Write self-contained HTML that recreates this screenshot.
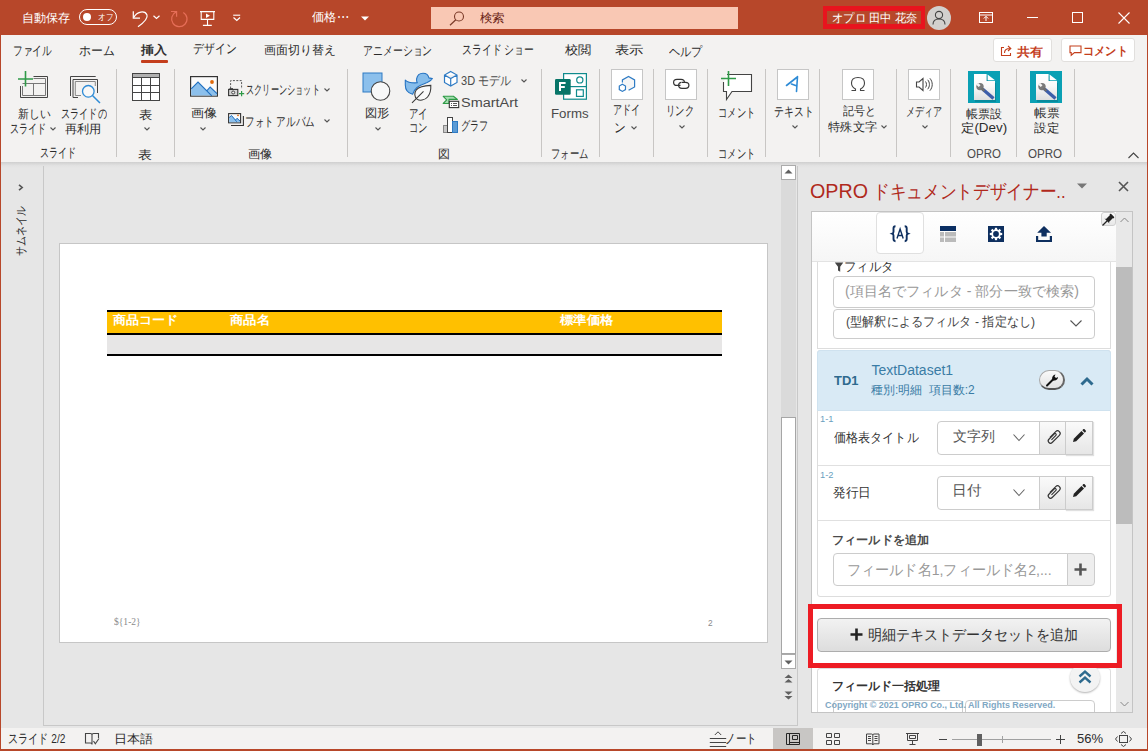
<!DOCTYPE html>
<html lang="ja"><head><meta charset="utf-8">
<style>
*{box-sizing:border-box}
html,body{margin:0;padding:0}
body{width:1148px;height:751px;position:relative;overflow:hidden;background:#E6E6E6;font-family:"Liberation Sans",sans-serif;color:#2B2B2B}
.a{position:absolute}
.t{position:absolute;white-space:nowrap;line-height:1;font-size:12px;transform-origin:0 0}
.w{color:#fff}
.sep{position:absolute;width:1px;background:#C8C6C4}
svg{position:absolute;overflow:visible}
</style></head><body>
<svg width="0" height="0" style="position:absolute"><defs><linearGradient id="dg" x1="0" y1="0" x2="0" y2="1"><stop offset="0" stop-color="#FFFFFF"/><stop offset="0.45" stop-color="#FAFAFA"/><stop offset="1" stop-color="#DEDEDE"/></linearGradient></defs></svg>
<!-- title bar -->
<div class="a" style="left:0;top:0;width:1148px;height:35px;background:#B7472A"></div>
<div id="t_autosave" class="t w" style="left:22.4px;top:11.5px;transform:scaleX(1.011)">自動保存</div>
<div class="a" style="left:79px;top:9px;width:38px;height:16px;border:1px solid #fff;border-radius:8px"></div>
<div class="a" style="left:83px;top:13px;width:8px;height:8px;border-radius:50%;background:#fff"></div>
<div id="t_off" class="t w" style="left:97.5px;top:12.9px;font-size:9px;transform:scaleX(0.848)">オフ</div>
<svg style="left:125px;top:5px" width="30" height="25" viewBox="125 5 30 25"><path d="M133.3 11.3 V18.2 H140" fill="none" stroke="#fff" stroke-width="1.2"/><path d="M133.8 17.6 C136.5 11.5 145 10 147 15 C148 18 146 21 138 26.8" fill="none" stroke="#fff" stroke-width="1.2"/></svg>
<svg style="left:152px;top:14px" width="9" height="6" viewBox="152 14 9 6"><path d="M153.5 15.7 L156.5 18.5 L159.5 15.7" fill="none" stroke="#fff" stroke-width="1.2"/></svg>
<svg style="left:168px;top:8px" width="22" height="22" viewBox="168 8 22 22"><path d="M176.3 11.9 A7.7 7.7 0 1 0 183.3 12.4" fill="none" stroke="#E66E58" stroke-width="1.2"/><path d="M171 11.5 H176.6 V16.8" fill="none" stroke="#E66E58" stroke-width="1.2"/></svg>
<svg style="left:198px;top:9px" width="19" height="19" viewBox="198 9 19 19"><path d="M200 11.6 H215 M201.2 11.6 V19.4 H213.8 V11.6 M207.5 19.4 V25.4 M202.9 25.4 H211.8" fill="none" stroke="#fff" stroke-width="1.1"/><path d="M206 13.4 L210 15.7 L206 18 Z" fill="#fff"/></svg>
<svg style="left:231px;top:13px" width="11" height="9" viewBox="231 13 11 9"><path d="M233.2 15.2 H240.2" stroke="#fff" stroke-width="1.1"/><path d="M233.5 17.5 L236.8 20.5 L240 17.5" fill="none" stroke="#fff" stroke-width="1.2"/></svg>
<div id="t_fname" class="t w" style="left:312.0px;top:11.4px;transform:scaleX(1.029)">価格⋯</div>
<svg style="left:361px;top:16px" width="8" height="5" viewBox="0 0 8 5"><path d="M0 0.5 H8 L4 4.5 Z" fill="#fff"/></svg>
<div class="a" style="left:431px;top:7px;width:307px;height:22px;background:#F9C8B4"></div>
<svg style="left:449px;top:11px" width="16" height="15" viewBox="0 0 16 15"><circle cx="10" cy="5.5" r="4.5" fill="none" stroke="#7A3A28" stroke-width="1.1"/><path d="M6.8 8.7 L1 14.3" stroke="#7A3A28" stroke-width="1.2"/></svg>
<div id="t_search" class="t" style="left:479.7px;top:12.0px;color:#6A2414;transform:scaleX(1.037)">検索</div>
<div class="a" style="left:823px;top:6px;width:102px;height:23px;border-style:solid;border-color:#E8141E;border-width:5px 4px"></div>
<div id="t_user" class="t w" style="left:832.1px;top:12.0px;transform:scaleX(0.944)">オプロ 田中 花奈</div>
<div class="a" style="left:927px;top:6px;width:24px;height:24px;border-radius:50%;background:#D2D0CE"></div>
<svg style="left:932px;top:10px" width="14" height="16" viewBox="0 0 14 16"><circle cx="7" cy="5" r="3.6" fill="none" stroke="#444" stroke-width="1.1"/><path d="M1 14.5 C1 10.5 3.5 9 7 9 C10.5 9 13 10.5 13 14.5" fill="none" stroke="#444" stroke-width="1.1"/></svg>
<svg style="left:979px;top:12px" width="14" height="11" viewBox="0 0 14 11"><rect x="0.5" y="0.5" width="13" height="10" fill="none" stroke="#fff" stroke-width="1"/><path d="M0.5 3 H13.5 M7 9 V4.5 M4.8 6.5 L7 4.3 L9.2 6.5" fill="none" stroke="#fff" stroke-width="1"/></svg>
<div class="a" style="left:1027px;top:17px;width:11px;height:1px;background:#fff"></div>
<div class="a" style="left:1072px;top:12px;width:11px;height:11px;border:1px solid #fff"></div>
<svg style="left:1118px;top:12px" width="12" height="12" viewBox="0 0 12 12"><path d="M0.5 0.5 L11.5 11.5 M11.5 0.5 L0.5 11.5" stroke="#fff" stroke-width="1.1"/></svg>

<!-- window border -->
<div class="a" style="left:0;top:35px;width:1px;height:716px;background:#B7472A"></div>
<div class="a" style="left:1147px;top:35px;width:1px;height:716px;background:#B7472A"></div>
<div class="a" style="left:0;top:749px;width:1148px;height:2px;background:#B7472A"></div>

<!-- ribbon -->
<div class="a" style="left:1px;top:35px;width:1146px;height:127px;background:#F3F2F1"></div>
<div class="a" style="left:1px;top:162px;width:1146px;height:6px;background:linear-gradient(#CFCFCF,#E2E2E2 60%,#E6E6E6)"></div>
<!-- tabs -->
<div id="t_file" class="t" style="left:13.3px;top:43.5px;font-size:13px;transform:scaleX(0.748)">ファイル</div>
<div id="t_home" class="t" style="left:79.1px;top:43.5px;font-size:13px;transform:scaleX(0.916)">ホーム</div>
<div id="t_insert" class="t" style="left:141.0px;top:44.0px;font-weight:bold;color:#333;transform:scaleX(1.083)">挿入</div>
<div class="a" style="left:141px;top:60px;width:27px;height:3px;background:#C43E1C;border-radius:1px"></div>
<div id="t_design" class="t" style="left:193.2px;top:42.0px;font-size:13px;transform:scaleX(0.834)">デザイン</div>
<div id="t_trans" class="t" style="left:264.0px;top:44.0px;transform:scaleX(1.000)">画面切り替え</div>
<div id="t_anim" class="t" style="left:363.3px;top:43.5px;font-size:13px;transform:scaleX(0.762)">アニメーション</div>
<div id="t_show" class="t" style="left:462.3px;top:42.5px;font-size:13px;transform:scaleX(0.759)">スライド ショー</div>
<div id="t_review" class="t" style="left:564.5px;top:44.0px;transform:scaleX(1.105)">校閲</div>
<div id="t_view" class="t" style="left:615.4px;top:44.0px;transform:scaleX(1.192)">表示</div>
<div id="t_help" class="t" style="left:669.3px;top:44.5px;font-size:13px;transform:scaleX(0.861)">ヘルプ</div>
<div class="a" style="left:993px;top:38px;width:59px;height:24px;background:#fff;border:1px solid #E1DFDD;border-radius:3px"></div>
<svg style="left:1000px;top:44px" width="13" height="13" viewBox="1000 44 13 13"><path d="M1004 47.5 H1001.5 V55.5 H1010.5 V53" fill="none" stroke="#C43E1C" stroke-width="1.1"/><path d="M1004.5 53 C1004.5 49.5 1006.5 48.5 1010 48.5 M1008 46 L1010.8 48.5 L1008 51" fill="none" stroke="#C43E1C" stroke-width="1.1"/></svg>
<div id="t_share" class="t" style="left:1017.0px;top:45.5px;font-weight:bold;color:#C43E1C;transform:scaleX(1.076)">共有</div>
<div class="a" style="left:1061px;top:38px;width:74px;height:24px;background:#fff;border:1px solid #E1DFDD;border-radius:3px"></div>
<svg style="left:1068px;top:44px" width="15" height="13" viewBox="1068 44 15 13"><path d="M1070 46 H1081 V52.6 H1074.5 L1071.2 55.3 V52.6 H1070 Z" fill="none" stroke="#C43E1C" stroke-width="1.1"/></svg>
<div id="t_comment" class="t" style="left:1083.2px;top:44.5px;font-weight:bold;color:#C43E1C;transform:scaleX(0.933)">コメント</div>
<!-- ribbon groups -->
<div class="sep" style="left:116px;top:69px;height:88px"></div>
<div class="sep" style="left:174px;top:69px;height:88px"></div>
<div class="sep" style="left:347px;top:69px;height:88px"></div>
<div class="sep" style="left:541px;top:69px;height:88px"></div>
<div class="sep" style="left:599px;top:69px;height:88px"></div>
<div class="sep" style="left:653px;top:69px;height:88px"></div>
<div class="sep" style="left:707px;top:69px;height:88px"></div>
<div class="sep" style="left:765px;top:69px;height:88px"></div>
<div class="sep" style="left:819px;top:69px;height:88px"></div>
<div class="sep" style="left:896px;top:69px;height:88px"></div>
<div class="sep" style="left:950px;top:69px;height:88px"></div>
<div class="sep" style="left:1016px;top:69px;height:88px"></div>
<div class="sep" style="left:1074px;top:69px;height:88px"></div>
<!-- RIBBON CONTENT -->
<!-- new slide -->
<svg style="left:18px;top:71px" width="32" height="29" viewBox="18 71 32 29">
<path d="M33.5 76.5 H47.5 V97.5 H20.5 V86" fill="none" stroke="#444" stroke-width="1"/>
<path d="M33.5 78.5 H45.5 V95.5 H22.5 V86 M22.5 83.5 H45.5 M33.5 83.5 V95.5" fill="none" stroke="#777" stroke-width="1"/>
<path d="M18 79 H33 M25.5 71 V86.5" fill="none" stroke="#2F9A48" stroke-width="1.6"/>
</svg>
<div id="t_new1" class="t" style="left:17.7px;top:107.8px;transform:scaleX(0.899)">新しい</div>
<div id="t_new2" class="t" style="left:10.4px;top:121.6px;font-size:13px;transform:scaleX(0.699)">スライド</div>
<svg class="cr" style="left:50px;top:127px" width="6" height="4" viewBox="0 0 6 4"><path d="M0.5 0.5 L3 3 L5.5 0.5" fill="none" stroke="#555" stroke-width="1.1"/></svg>
<!-- reuse -->
<svg style="left:69px;top:75px" width="33" height="29" viewBox="69 75 33 29">
<path d="M70.5 96 V76.5 H95.7" fill="none" stroke="#444" stroke-width="1"/>
<path d="M78 97.5 H73 V79.5 H97.5 V93" fill="none" stroke="#444" stroke-width="1"/>
<path d="M81 95.5 H75.3 V81.5 H95.3 V86" fill="none" stroke="#888" stroke-width="1"/>
<circle cx="88.3" cy="91.3" r="5.8" fill="#F8F8F8" stroke="#2E8BD6" stroke-width="1.3"/>
<path d="M92.5 95.5 L100 103" stroke="#2E8BD6" stroke-width="1.5"/>
</svg>
<div id="t_reuse1" class="t" style="left:61.0px;top:106.8px;font-size:13px;transform:scaleX(0.704)">スライドの</div>
<div id="t_reuse2" class="t" style="left:65.2px;top:123.1px;transform:scaleX(1.015)">再利用</div>
<div id="t_g_slide" class="t" style="left:40.4px;top:146.3px;font-size:13px;transform:scaleX(0.699)">スライド</div>
<!-- table -->
<svg style="left:131px;top:72px" width="31" height="30" viewBox="131 72 31 30">
<rect x="132.5" y="73.5" width="27" height="27" fill="#fff" stroke="#444" stroke-width="1"/>
<rect x="133" y="74" width="26" height="3" fill="#B0B0B0"/>
<path d="M132.5 77.5 H159.5 M132.5 85.5 H159.5 M132.5 92.5 H159.5 M141.5 77.5 V100.5 M150.5 77.5 V100.5" fill="none" stroke="#444" stroke-width="1"/>
</svg>
<div id="t_table" class="t" style="left:138.9px;top:108.5px;transform:scaleX(1.108)">表</div>
<svg class="cr" style="left:144px;top:127px" width="6" height="4" viewBox="0 0 6 4"><path d="M0.5 0.5 L3 3 L5.5 0.5" fill="none" stroke="#555" stroke-width="1.1"/></svg>
<div id="t_g_table" class="t" style="left:138.1px;top:148.5px;transform:scaleX(1.165)">表</div>
<!-- image -->
<svg style="left:189px;top:75px" width="30" height="23" viewBox="189 75 30 23">
<rect x="190.6" y="76.6" width="26.8" height="19.5" fill="#FAFAFA" stroke="#333" stroke-width="1.2"/>
<path d="M191.2 88.8 L198 82 L207 90.6 L210.2 87 L217 93.6 V95.6 H191.2 Z" fill="#8CC0EC"/>
<path d="M191.2 88.8 L198 82 L211.8 95.8 M207 90.6 L210.2 87 L217 93.6" fill="none" stroke="#1F6FC0" stroke-width="1.1"/>
<circle cx="212" cy="82" r="1.9" fill="#E0690A"/>
</svg>
<div id="t_image" class="t" style="left:190.9px;top:107.3px;transform:scaleX(1.091)">画像</div>
<svg class="cr" style="left:200px;top:127px" width="6" height="4" viewBox="0 0 6 4"><path d="M0.5 0.5 L3 3 L5.5 0.5" fill="none" stroke="#555" stroke-width="1.1"/></svg>
<svg style="left:227px;top:79px" width="18" height="18" viewBox="227 79 18 18">
<path d="M230.6 88.5 V80.6 H241.6 V89" fill="none" stroke="#555" stroke-width="1" stroke-dasharray="2 1.4"/>
<rect x="228.6" y="89.4" width="9.2" height="6.2" fill="#D4D4D4" stroke="#333" stroke-width="1.1"/>
<rect x="229.5" y="88.2" width="3.5" height="1.4" fill="#333"/>
<circle cx="233.2" cy="92.5" r="1.5" fill="#F4F4F4" stroke="#333" stroke-width="0.9"/>
<path d="M239 93.6 H244.2 M241.6 91 V96.2" stroke="#2F9A48" stroke-width="1.2"/>
</svg>
<div id="t_screenshot" class="t" style="left:246.4px;top:82.7px;font-size:13px;transform:scaleX(0.630)">スクリーンショット</div>
<svg class="cr" style="left:324px;top:88px" width="6" height="4" viewBox="0 0 6 4"><path d="M0.5 0.5 L3 3 L5.5 0.5" fill="none" stroke="#555" stroke-width="1.1"/></svg>
<svg style="left:227px;top:112px" width="18" height="15" viewBox="227 112 18 15">
<path d="M231 125.5 H243.4 V116" fill="none" stroke="#333" stroke-width="1.1"/>
<rect x="228.6" y="113.6" width="12" height="9.2" fill="#FAFAFA" stroke="#333" stroke-width="1.1"/>
<path d="M229.2 117.5 L231.5 115.5 L235.5 120 L237 118.3 L240 121 V122.2 H229.2 Z" fill="#8CC0EC"/>
<path d="M229.2 117.5 L231.5 115.5 L236.8 121.8 M235.5 120 L237 118.3 L240 121" fill="none" stroke="#1F6FC0" stroke-width="1"/>
<circle cx="238" cy="115.3" r="0.9" fill="#E0690A"/>
</svg>
<div id="t_album" class="t" style="left:245.3px;top:114.6px;font-size:13px;transform:scaleX(0.738)">フォト アルバム</div>
<svg class="cr" style="left:324px;top:119px" width="6" height="4" viewBox="0 0 6 4"><path d="M0.5 0.5 L3 3 L5.5 0.5" fill="none" stroke="#555" stroke-width="1.1"/></svg>
<div id="t_g_image" class="t" style="left:248.4px;top:147.8px;transform:scaleX(1.024)">画像</div>
<!-- shapes -->
<svg style="left:362px;top:72px" width="30" height="30" viewBox="362 72 30 30">
<rect x="363" y="73" width="19" height="19" fill="#8CC0EC" stroke="#2E7BC4" stroke-width="1"/>
<circle cx="380.5" cy="91" r="9.3" fill="#F8F8F8" stroke="#444" stroke-width="1.1"/>
</svg>
<div id="t_shapes" class="t" style="left:365.0px;top:106.8px;transform:scaleX(1.023)">図形</div>
<svg class="cr" style="left:375px;top:127px" width="6" height="4" viewBox="0 0 6 4"><path d="M0.5 0.5 L3 3 L5.5 0.5" fill="none" stroke="#555" stroke-width="1.1"/></svg>
<!-- icons -->
<svg style="left:403px;top:71px" width="32" height="33" viewBox="403 71 32 33"><path d="M405.3 80.1 C407.5 82.3 411 83.2 417.3 82.8 C416.6 81.6 416.4 80.2 416.6 78.8 C417.2 75.5 419.8 73.2 423 73.2 C426 73.2 428.4 75.3 428.9 77.9 L432.4 78.6 C431.3 80.6 429.6 81.6 427.2 82.6 C423.5 84 420 85 417 87.5 C414.8 89.5 413.2 91.8 412.6 94.3 C407.8 93 405.3 89.5 405.3 85 Z" fill="#86BDEB" stroke="#2573C2" stroke-width="1.1" stroke-linejoin="round"/><path d="M430.8 85.4 C426 85.6 419.5 86.2 416.3 89.8 C414 92.5 414.4 97.3 417 99.1 C419.5 100.9 424.5 100.6 427.6 97 C430.4 93.6 431 89.3 430.8 85.4 Z" fill="#FAFAFA" stroke="#3A3A3A" stroke-width="1.1"/><path d="M412 102.8 L423.5 91.4" stroke="#3A3A3A" stroke-width="1.1"/></svg>
<div id="t_icon1" class="t" style="left:409.3px;top:106.5px;font-size:13px;transform:scaleX(0.725)">アイ</div>
<div id="t_icon2" class="t" style="left:408.6px;top:120.6px;font-size:13px;transform:scaleX(0.725)">コン</div>
<svg style="left:443px;top:70px" width="16" height="18" viewBox="443 70 16 18">
<path d="M450.7 71.5 L457 75 V82.5 L450.7 86 L444.5 82.5 V75 Z M444.5 75 L450.7 78.5 L457 75 M450.7 78.5 V86" fill="#fff" stroke="#2E7BC4" stroke-width="1.2"/>
</svg>
<div id="t_3d" class="t" style="left:461.1px;top:73.8px;color:#4A4A4A;font-size:13px;transform:scaleX(0.849)">3D モデル</div>
<svg class="cr" style="left:521px;top:79px" width="6" height="4" viewBox="0 0 6 4"><path d="M0.5 0.5 L3 3 L5.5 0.5" fill="none" stroke="#555" stroke-width="1.1"/></svg>
<svg style="left:442px;top:95px" width="18" height="14" viewBox="442 95 18 14">
<path d="M443.2 96.3 H453.4 L457.4 99.4 H449 V103.5 H443.2 L446.7 99.9 Z" fill="#A6DDB0" stroke="#2C9A45" stroke-width="1.1" stroke-linejoin="round"/>
<rect x="449.3" y="101.3" width="9.4" height="6.3" fill="#fff" stroke="#333" stroke-width="1.1"/>
<path d="M451 103.5 H452 M453 103.5 H457 M451 105.5 H452 M453 105.5 H457" stroke="#444" stroke-width="0.9"/>
</svg>
<div id="t_smartart" class="t" style="left:460.8px;top:97.4px;color:#4A4A4A;transform:scaleX(1.203)">SmartArt</div>
<svg style="left:442px;top:116px" width="18" height="18" viewBox="442 116 18 18">
<rect x="443.5" y="125.5" width="4" height="7" fill="#C8C8C8" stroke="#888" stroke-width="1"/>
<rect x="447.5" y="117.5" width="5" height="15" fill="#fff" stroke="#444" stroke-width="1"/>
<rect x="452.5" y="121.5" width="5" height="11" fill="#5B9BD5" stroke="#2E7BC4" stroke-width="1"/>
</svg>
<div id="t_graph" class="t" style="left:461.3px;top:119.0px;font-size:13px;transform:scaleX(0.707)">グラフ</div>
<div id="t_g_zu" class="t" style="left:438.0px;top:147.9px;transform:scaleX(1.000)">図</div>
<!-- forms -->
<svg style="left:554px;top:72px" width="34" height="29" viewBox="554 72 34 29">
<rect x="563.6" y="73.6" width="22.8" height="25.6" fill="#fff" stroke="#0F8B8D" stroke-width="1.2"/>
<path d="M563.6 86.6 H586.4" stroke="#0F8B8D" stroke-width="1.2"/>
<circle cx="579.8" cy="79.9" r="3.1" fill="none" stroke="#0F8B8D" stroke-width="1.2"/>
<rect x="576.5" y="89.8" width="6.8" height="6.6" fill="none" stroke="#0F8B8D" stroke-width="1.2"/>
<rect x="555" y="79" width="15.7" height="15.8" rx="1.2" fill="#077568"/>
<path d="M560 91 V83 H565.6 M560 86.9 H564.8" stroke="#fff" stroke-width="2" fill="none"/>
</svg>
<div id="t_forms" class="t" style="left:551.4px;top:108.0px;color:#4A4A4A;transform:scaleX(1.106)">Forms</div>
<div id="t_g_form" class="t" style="left:550.8px;top:146.5px;font-size:13px;transform:scaleX(0.721)">フォーム</div>
<!-- addin -->
<div class="a" style="left:611px;top:69px;width:32px;height:31px;background:#fff;border:1px solid #C6C6C6"></div>
<svg style="left:616px;top:74px" width="21" height="20" viewBox="616 74 21 20"><path d="M622.4 82.6 V79.9 L628.5 76.4 L634.6 79.9 V86.9 L628.6 90.3" fill="#F6F6F6" stroke="#2E7BC4" stroke-width="1.2"/><path d="M622.4 84.2 L625.5 86 V89.6 L622.4 91.4 L619.3 89.6 V86 Z" fill="#fff" stroke="#2E7BC4" stroke-width="1.2"/></svg>
<div id="t_addin1" class="t" style="left:613.4px;top:103.2px;font-size:13px;transform:scaleX(0.697)">アドイ</div>
<div id="t_addin2" class="t" style="left:614.2px;top:120.5px;font-size:13px;transform:scaleX(0.900)">ン</div>
<svg class="cr" style="left:631px;top:126px" width="6" height="4" viewBox="0 0 6 4"><path d="M0.5 0.5 L3 3 L5.5 0.5" fill="none" stroke="#555" stroke-width="1.1"/></svg>
<!-- link -->
<div class="a" style="left:665px;top:69px;width:32px;height:31px;background:#fff;border:1px solid #C6C6C6"></div>
<svg style="left:672px;top:78px" width="19" height="12" viewBox="672 78 19 12"><path d="M680.5 85.4 H677 C675 85.4 673.6 84.1 673.6 82.4 C673.6 80.7 675 79.4 677 79.4 H681 C683 79.4 684.4 80.7 684.4 82.4" fill="none" stroke="#333" stroke-width="1.2"/><path d="M681.5 82.3 H685.5 C687.5 82.3 688.9 83.6 688.9 85.3 C688.9 87 687.5 88.3 685.5 88.3 H682 C680 88.3 678.6 87 678.6 85.3 C678.6 83.8 679.6 82.8 681 82.4" fill="none" stroke="#333" stroke-width="1.2"/></svg>
<div id="t_link" class="t" style="left:665.9px;top:103.5px;font-size:13px;transform:scaleX(0.717)">リンク</div>
<svg class="cr" style="left:679px;top:125px" width="6" height="4" viewBox="0 0 6 4"><path d="M0.5 0.5 L3 3 L5.5 0.5" fill="none" stroke="#555" stroke-width="1.1"/></svg>
<!-- comment -->
<svg style="left:720px;top:70px" width="33" height="31" viewBox="720 70 33 31">
<path d="M727 74.5 H751.5 V91.5 H732 L726.5 99.5 V91.5 H723.5 V82" fill="#fff" stroke="#444" stroke-width="1.1"/>
<path d="M721 78.5 H736 M728.5 71 V86" stroke="#2F9A48" stroke-width="1.6"/>
</svg>
<div id="t_comment_r" class="t" style="left:718.0px;top:106.1px;font-size:13px;transform:scaleX(0.717)">コメント</div>
<div id="t_g_comment" class="t" style="left:718.0px;top:146.5px;font-size:13px;transform:scaleX(0.717)">コメント</div>
<!-- text -->
<div class="a" style="left:777px;top:69px;width:32px;height:31px;background:#fff;border:1px solid #C6C6C6"></div>
<svg style="left:785px;top:75px" width="16" height="18" viewBox="785 75 16 18">
<path d="M797.5 76.5 L796.5 91.5 M797.3 77 L786.5 85.5 M791.5 84 L797 86" fill="none" stroke="#2E8BD6" stroke-width="1.6" stroke-linecap="round"/>
</svg>
<div id="t_text" class="t" style="left:774.3px;top:104.8px;font-size:13px;transform:scaleX(0.757)">テキスト</div>
<svg class="cr" style="left:792px;top:125px" width="6" height="4" viewBox="0 0 6 4"><path d="M0.5 0.5 L3 3 L5.5 0.5" fill="none" stroke="#555" stroke-width="1.1"/></svg>
<!-- symbol -->
<div class="a" style="left:842px;top:69px;width:32px;height:31px;background:#fff;border:1px solid #C6C6C6"></div>
<svg style="left:850px;top:76px" width="16" height="16" viewBox="850 76 16 16">
<path d="M851.5 90.5 H855.5 V89 C852.5 87.5 851.5 85 851.5 83 C851.5 79.5 854.3 77.5 858 77.5 C861.7 77.5 864.5 79.5 864.5 83 C864.5 85 863.5 87.5 860.5 89 V90.5 H864.5" fill="none" stroke="#444" stroke-width="1.1"/>
</svg>
<div id="t_sym1" class="t" style="left:843.0px;top:105.3px;transform:scaleX(0.913)">記号と</div>
<div id="t_sym2" class="t" style="left:828.0px;top:121.2px;transform:scaleX(1.021)">特殊文字</div>
<svg class="cr" style="left:881px;top:125px" width="6" height="4" viewBox="0 0 6 4"><path d="M0.5 0.5 L3 3 L5.5 0.5" fill="none" stroke="#555" stroke-width="1.1"/></svg>
<!-- media -->
<div class="a" style="left:908px;top:69px;width:32px;height:31px;background:#fff;border:1px solid #C6C6C6"></div>
<svg style="left:915px;top:77px" width="18" height="15" viewBox="915 77 18 15">
<path d="M916.5 82 H919 L923 78.5 V90.5 L919 87 H916.5 Z" fill="none" stroke="#444" stroke-width="1.1"/>
<path d="M925.5 81.5 C926.8 83 926.8 86 925.5 87.5 M927.7 79.8 C930 82.5 930 86.5 927.7 89.2 M929.9 78.3 C933 82 933 87 929.9 90.7" fill="none" stroke="#444" stroke-width="1"/>
</svg>
<div id="t_media" class="t" style="left:905.6px;top:104.5px;font-size:13px;transform:scaleX(0.697)">メディア</div>
<svg class="cr" style="left:922px;top:125px" width="6" height="4" viewBox="0 0 6 4"><path d="M0.5 0.5 L3 3 L5.5 0.5" fill="none" stroke="#555" stroke-width="1.1"/></svg>
<!-- opro -->
<svg style="left:968px;top:71px" width="32" height="32" viewBox="0 0 32 32">
<rect x="0" y="0" width="32" height="32" fill="#0AA0B4"/>
<path d="M7 5 H20 V12 H28 V31 H7 Z" fill="#078A9C"/>
<path d="M6 3 H18.6 V10 H27 V29 H6 Z" fill="url(#dg)"/>
<path d="M19.6 3.6 L27 9.2 H19.6 Z" fill="#fff"/>
<path d="M14.5 18 L25.5 27.5" stroke="#3D5EAA" stroke-width="3.3"/>
<circle cx="12" cy="15.6" r="3.7" fill="#7A7A7A"/>
<path d="M9.2 12.8 L11.6 15.2" stroke="#F4F4F4" stroke-width="2.6"/>
<path d="M13.5 17.2 L16.3 20" stroke="#6E6E6E" stroke-width="2.4"/>
</svg>
<div id="t_opro1a" class="t" style="left:965.9px;top:107.8px;transform:scaleX(1.003)">帳票設</div>
<div id="t_opro1b" class="t" style="left:960.8px;top:122.4px;transform:scaleX(1.116)">定(Dev)</div>
<div id="t_g_opro1" class="t" style="left:966.5px;top:147.8px;transform:scaleX(0.959);color:#4A4A4A">OPRO</div>
<svg style="left:1030px;top:71px" width="32" height="32" viewBox="0 0 32 32">
<rect x="0" y="0" width="32" height="32" fill="#0AA0B4"/>
<path d="M7 5 H20 V12 H28 V31 H7 Z" fill="#078A9C"/>
<path d="M6 3 H18.6 V10 H27 V29 H6 Z" fill="url(#dg)"/>
<path d="M19.6 3.6 L27 9.2 H19.6 Z" fill="#fff"/>
<path d="M14.5 18 L25.5 27.5" stroke="#3D5EAA" stroke-width="3.3"/>
<circle cx="12" cy="15.6" r="3.7" fill="#7A7A7A"/>
<path d="M9.2 12.8 L11.6 15.2" stroke="#F4F4F4" stroke-width="2.6"/>
<path d="M13.5 17.2 L16.3 20" stroke="#6E6E6E" stroke-width="2.4"/>
</svg>
<div id="t_opro2a" class="t" style="left:1034.0px;top:107.0px;transform:scaleX(1.063)">帳票</div>
<div id="t_opro2b" class="t" style="left:1034.0px;top:122.0px;transform:scaleX(1.043)">設定</div>
<div id="t_g_opro2" class="t" style="left:1028.0px;top:147.8px;transform:scaleX(0.966);color:#4A4A4A">OPRO</div>
<svg style="left:1128px;top:152px" width="11" height="7" viewBox="0 0 11 7"><path d="M0.5 6 L5.5 1 L10.5 6" fill="none" stroke="#444" stroke-width="1.1"/></svg>

<!-- MAIN AREA -->
<!-- left pane -->
<div class="a" style="left:43px;top:166px;width:1px;height:560px;background:#C8C8C8"></div>
<svg style="left:18px;top:184px" width="6" height="7" viewBox="0 0 6 7"><path d="M1 0.8 L4.2 3.5 L1 6.2" fill="none" stroke="#555" stroke-width="1.6"/></svg>
<div id="t_thumb" class="t" style="left:15px;top:256px;transform:rotate(-90deg) scaleX(0.823)">サムネイル</div>
<div class="a" style="left:44px;top:725px;width:754px;height:1px;background:#C8C8C8"></div>
<!-- slide -->
<div class="a" style="left:59px;top:243px;width:709px;height:400px;background:#fff;border:1px solid #C6C6C6"></div>
<div class="a" style="left:107px;top:310px;width:615px;height:2px;background:#000"></div>
<div class="a" style="left:107px;top:312px;width:615px;height:21px;background:#FFC000"></div>
<div class="a" style="left:107px;top:333px;width:615px;height:2px;background:#000"></div>
<div class="a" style="left:107px;top:335px;width:615px;height:19px;background:#E7E6E6"></div>
<div class="a" style="left:107px;top:354px;width:615px;height:2px;background:#000"></div>
<div id="t_h1" class="t w" style="left:113.2px;top:314.0px;font-weight:bold;transform:scaleX(1.083)">商品コード</div>
<div id="t_h2" class="t w" style="left:230.2px;top:314.0px;font-weight:bold;transform:scaleX(1.109)">商品名</div>
<div id="t_h3" class="t w" style="left:560.4px;top:313.6px;font-weight:bold;transform:scaleX(1.113)">標準価格</div>
<div id="t_foot1" class="t" style="left:113.7px;top:616.0px;font-size:11px;color:#8A8A8A;font-family:'Liberation Serif',serif;transform:scaleX(0.868)">${1-2}</div>
<div id="t_foot2" class="t" style="left:708.0px;top:618.6px;font-size:9px;color:#8A8A8A;transform:scaleX(0.926)">2</div>
<!-- v scrollbar -->
<div class="a" style="left:781px;top:165px;width:15px;height:504px;background:#DADADA"></div>
<div class="a" style="left:781px;top:165px;width:15px;height:15px;background:#fff;border:1px solid #ABABAB"></div>
<svg style="left:784px;top:169px" width="9" height="5" viewBox="0 0 9 5"><path d="M0.5 4.5 L4.5 0.5 L8.5 4.5 Z" fill="#606060"/></svg>
<div class="a" style="left:781px;top:417px;width:15px;height:237px;background:#fff;border:1px solid #A6A6A6"></div>
<div class="a" style="left:781px;top:654px;width:15px;height:15px;background:#fff;border:1px solid #ABABAB"></div>
<svg style="left:784px;top:660px" width="9" height="5" viewBox="0 0 9 5"><path d="M0.5 0.5 L4.5 4.5 L8.5 0.5 Z" fill="#606060"/></svg>
<svg style="left:784px;top:674px" width="9" height="9" viewBox="0 0 9 9"><path d="M0.5 4 L4.5 0.5 L8.5 4 Z M0.5 8.5 L4.5 5 L8.5 8.5 Z" fill="#606060"/></svg>
<svg style="left:784px;top:691px" width="9" height="9" viewBox="0 0 9 9"><path d="M0.5 0.5 L4.5 4 L8.5 0.5 Z M0.5 5 L4.5 8.5 L8.5 5 Z" fill="#606060"/></svg>
<div class="a" style="left:797px;top:166px;width:1px;height:560px;background:#C8C8C8"></div>

<!-- TASK PANE -->
<div id="t_ptitle" class="t" style="left:810.4px;top:180.6px;font-size:20px;color:#B0291C;transform:scaleX(0.985)">OPRO</div><div id="t_ptitle2" class="t" style="left:872.7px;top:181.7px;font-size:19px;color:#B0291C;transform:scaleX(0.877)">ドキュメントデザイナー..</div>
<svg style="left:1077px;top:183px" width="10" height="6" viewBox="0 0 10 6"><path d="M0 0.5 H10 L5 5.5 Z" fill="#777"/></svg>
<svg style="left:1118px;top:181px" width="11" height="11" viewBox="0 0 11 11"><path d="M1 1 L10 10 M10 1 L1 10" stroke="#555" stroke-width="1.6"/></svg>
<div class="a" style="left:811px;top:211px;width:322px;height:502px;background:#fff;border:1px solid #C4C4C4"></div>
<div class="a" style="left:0;top:0;width:1148px;height:751px;clip-path:inset(212px 16px 39px 812px)">
<!-- content -->
<div class="a" style="left:817px;top:255px;width:294px;height:94px;border:1px solid #DDDDDD;border-top:none"></div>
<svg style="left:834px;top:262px" width="10" height="11" viewBox="834 262 10 11"><path d="M834.8 262.4 H843.3 L840.2 266.8 V271.8 L838 270.6 V266.8 Z" fill="#444"/></svg><div id="t_filter" class="t" style="left:844.0px;top:259.5px;font-size:13px;color:#333;transform:scaleX(0.958)">フィルタ</div>
<div class="a" style="left:833px;top:276px;width:262px;height:32px;border:1px solid #CCCCCC;border-radius:4px;background:#fff"></div>
<div id="t_ph1" class="t" style="left:845.4px;top:284.3px;font-size:14px;color:#999;transform:scaleX(1.009)">(項目名でフィルタ - 部分一致で検索)</div>
<div class="a" style="left:833px;top:309px;width:262px;height:30px;border:1px solid #CCCCCC;border-radius:4px;background:#fff"></div>
<div id="t_sel" class="t" style="left:845.5px;top:314.8px;font-size:13px;color:#444;transform:scaleX(0.935)">(型解釈によるフィルタ - 指定なし)</div>
<svg style="left:1070px;top:320px" width="12" height="7" viewBox="0 0 12 7"><path d="M0.5 0.5 L6 6 L11.5 0.5" fill="none" stroke="#555" stroke-width="1.1"/></svg>
<!-- TD1 card -->
<div class="a" style="left:817px;top:350px;width:294px;height:247px;border:1px solid #DDDDDD;border-radius:3px;background:#fff"></div>
<div class="a" style="left:817px;top:350px;width:294px;height:61px;background:#D9EAF5;border:1px solid #CFE2EF;border-radius:3px 3px 0 0"></div>
<div id="t_td1" class="t" style="left:834.0px;top:373.6px;font-size:13px;font-weight:bold;color:#2E6A8E;transform:scaleX(0.993)">TD1</div>
<div id="t_tds" class="t" style="left:871.4px;top:362.6px;font-size:14px;color:#3A7CA5;transform:scaleX(1.000)">TextDataset1</div>
<div id="t_tdinfo" class="t" style="left:871.4px;top:384.2px;font-size:12px;color:#3A7CA5;transform:scaleX(0.996)">種別:明細&nbsp;&nbsp;項目数:2</div>
<div class="a" style="left:1039px;top:370px;width:26px;height:20px;border-radius:10px;background:linear-gradient(#FAFAFA,#E2E2E2);border:1px solid #AAA;border-right:2px solid #666;border-bottom:2px solid #555"></div>
<svg style="left:1045px;top:373px" width="15" height="14" viewBox="0 0 15 14"><path d="M2 12.5 L8 6.5" stroke="#111" stroke-width="2" stroke-linecap="round"/><path d="M7.5 7 C6.5 5 7.5 2 10.5 1.5 L9.5 3.5 L11 5 L13 4 C13 7 10 8.5 7.5 7 Z" fill="#111"/></svg>
<svg style="left:1080px;top:376px" width="14" height="10" viewBox="0 0 14 10"><path d="M1.5 8.5 L7 3 L12.5 8.5" fill="none" stroke="#2E6A8E" stroke-width="3"/></svg>
<!-- field rows -->
<div id="t_f11" class="t" style="left:820.3px;top:415.4px;font-size:9px;color:#6A9FC0;transform:scaleX(1.036)">1-1</div>
<div id="t_f1" class="t" style="left:834.0px;top:430.9px;font-size:13px;color:#333;transform:scaleX(0.930)">価格表タイトル</div>
<div class="a" style="left:937px;top:421px;width:103px;height:34px;border:1px solid #CCCCCC;border-radius:4px 0 0 4px;background:#fff"></div>
<div id="t_f1v" class="t" style="left:953.1px;top:428.8px;font-size:14px;color:#555;transform:scaleX(0.997)">文字列</div>
<svg style="left:1013px;top:434px" width="12" height="8" viewBox="0 0 12 8"><path d="M0.5 0.5 L6 6.5 L11.5 0.5" fill="none" stroke="#666" stroke-width="1.1"/></svg>
<div class="a" style="left:1039px;top:421px;width:27px;height:34px;border:1px solid #CCCCCC;background:linear-gradient(#FAFAFA,#E6E6E6)"></div>
<div class="a" style="left:1065px;top:421px;width:28px;height:34px;border:1px solid #CCCCCC;background:linear-gradient(#FAFAFA,#E6E6E6);box-shadow:1px 1px 1px rgba(0,0,0,.12)"></div>
<div class="a" style="left:818px;top:465px;width:292px;height:1px;background:#E0E0E0"></div>
<div id="t_f12" class="t" style="left:820.3px;top:470.5px;font-size:9px;color:#6A9FC0;transform:scaleX(1.036)">1-2</div>
<div id="t_f2" class="t" style="left:833.0px;top:486.4px;font-size:13px;color:#333;transform:scaleX(0.974)">発行日</div>
<div class="a" style="left:937px;top:476px;width:103px;height:34px;border:1px solid #CCCCCC;border-radius:4px 0 0 4px;background:#fff"></div>
<div id="t_f2v" class="t" style="left:952.0px;top:483.3px;font-size:14px;color:#555;transform:scaleX(1.050)">日付</div>
<svg style="left:1013px;top:489px" width="12" height="8" viewBox="0 0 12 8"><path d="M0.5 0.5 L6 6.5 L11.5 0.5" fill="none" stroke="#666" stroke-width="1.1"/></svg>
<div class="a" style="left:1039px;top:476px;width:27px;height:34px;border:1px solid #CCCCCC;background:linear-gradient(#FAFAFA,#E6E6E6)"></div>
<div class="a" style="left:1065px;top:476px;width:28px;height:34px;border:1px solid #CCCCCC;background:linear-gradient(#FAFAFA,#E6E6E6);box-shadow:1px 1px 1px rgba(0,0,0,.12)"></div>
<div class="a" style="left:818px;top:520px;width:292px;height:1px;background:#E0E0E0"></div>
<!-- clip/pencil icons -->
<svg style="left:1045px;top:428px" width="18" height="18" viewBox="-9 -9 18 18"><g transform="rotate(45)"><path d="M-2.6 3.5 V-5 A2.6 2.6 0 0 1 2.6 -5 V5.2 A2.3 2.3 0 0 1 -2 5.2 V-2.5 A1.1 1.1 0 0 1 0.2 -2.5 V3.8" fill="none" stroke="#333" stroke-width="1.15"/></g></svg>
<svg style="left:1071px;top:428px" width="16" height="16" viewBox="0 0 16 16"><path d="M2 14 L2.8 10.8 L10.5 3 L13 5.5 L5.2 13.2 Z" fill="#222"/><path d="M11.3 2.2 L12.2 1.3 C12.6 0.9 13.2 0.9 13.6 1.3 L14.7 2.4 C15.1 2.8 15.1 3.4 14.7 3.8 L13.8 4.7 Z" fill="#222"/></svg>
<svg style="left:1045px;top:483px" width="18" height="18" viewBox="-9 -9 18 18"><g transform="rotate(45)"><path d="M-2.6 3.5 V-5 A2.6 2.6 0 0 1 2.6 -5 V5.2 A2.3 2.3 0 0 1 -2 5.2 V-2.5 A1.1 1.1 0 0 1 0.2 -2.5 V3.8" fill="none" stroke="#333" stroke-width="1.15"/></g></svg>
<svg style="left:1071px;top:483px" width="16" height="16" viewBox="0 0 16 16"><path d="M2 14 L2.8 10.8 L10.5 3 L13 5.5 L5.2 13.2 Z" fill="#222"/><path d="M11.3 2.2 L12.2 1.3 C12.6 0.9 13.2 0.9 13.6 1.3 L14.7 2.4 C15.1 2.8 15.1 3.4 14.7 3.8 L13.8 4.7 Z" fill="#222"/></svg>
<!-- add field -->
<div id="t_addf" class="t" style="left:831.9px;top:533.8px;font-size:12px;font-weight:bold;color:#4A4A4A;transform:scaleX(1.011)">フィールドを追加</div>
<div class="a" style="left:833px;top:553px;width:235px;height:33px;border:1px solid #CCCCCC;border-radius:4px 0 0 4px;background:#fff"></div>
<div id="t_ph2" class="t" style="left:846.6px;top:562.0px;font-size:15px;color:#999;transform:scaleX(0.941)">フィールド名1,フィールド名2,...</div>
<div class="a" style="left:1067px;top:553px;width:28px;height:33px;border:1px solid #CCCCCC;border-radius:0 4px 4px 0;background:#EEEEEE"></div>
<svg style="left:1074px;top:563px" width="13" height="13" viewBox="0 0 13 13"><path d="M6.5 0.5 V12.5 M0.5 6.5 H12.5" stroke="#555" stroke-width="2.6"/></svg>
<!-- add dataset button -->
<div class="a" style="left:817px;top:618px;width:294px;height:34px;border:1px solid #ADADAD;border-radius:4px;background:linear-gradient(#F2F2F2,#DDDDDD)"></div>
<svg style="left:850px;top:628px" width="13" height="13" viewBox="0 0 13 13"><path d="M6.5 0.5 V12.5 M0.5 6.5 H12.5" stroke="#222" stroke-width="2.6"/></svg>
<div id="t_btn" class="t" style="left:868.1px;top:627.2px;font-size:15px;color:#333;transform:scaleX(0.935)">明細テキストデータセットを追加</div>
<!-- bottom card -->
<div class="a" style="left:817px;top:668px;width:294px;height:60px;border:1px solid #DDDDDD;border-radius:3px;background:#fff"></div>
<div id="t_bulk" class="t" style="left:831.9px;top:680.2px;font-size:12px;font-weight:bold;color:#333;transform:scaleX(1.001)">フィールド一括処理</div>
<div class="a" style="left:833px;top:700px;width:130px;height:20px;border:1px solid #CCCCCC;border-radius:4px;background:#fff"></div>
<div class="a" style="left:965px;top:700px;width:130px;height:20px;border:1px solid #CCCCCC;border-radius:4px;background:#fff"></div>
<div id="t_copy" class="t" style="left:825.4px;top:701.4px;font-size:9px;font-weight:bold;color:#7FA8C4;transform:scaleX(0.995)">Copyright © 2021 OPRO Co., Ltd. All Rights Reserved.</div>
<div class="a" style="left:1070px;top:663px;width:30px;height:29px;border-radius:50%;background:#F3F3F3;box-shadow:0 1px 2px rgba(0,0,0,.3)"></div>
<svg style="left:1078px;top:669px" width="14" height="16" viewBox="0 0 14 16"><path d="M1.5 7.5 L7 2.5 L12.5 7.5 M1.5 13.5 L7 8.5 L12.5 13.5" fill="none" stroke="#2E6A8E" stroke-width="2.4"/></svg>
</div>
<!-- header overlay -->
<div class="a" style="left:812px;top:212px;width:304px;height:50px;background:linear-gradient(#FFFFFF,#F6F6F6);border-bottom:1px solid #E3E3E3"></div>
<div class="a" style="left:876px;top:212px;width:48px;height:42px;border:1px solid #E0E0E0;border-radius:4px;background:#fff"></div>
<svg style="left:890px;top:224px" width="20" height="20" viewBox="890 224 20 20"><path d="M895.5 226.2 C893.8 226.2 893.5 227 893.5 228.3 V231.8 C893.5 232.9 893 233.4 892.2 233.7 C893 234 893.5 234.5 893.5 235.6 V239.1 C893.5 240.4 893.8 241.2 895.5 241.2 M904.7 226.2 C906.4 226.2 906.7 227 906.7 228.3 V231.8 C906.7 232.9 907.2 233.4 908 233.7 C907.2 234 906.7 234.5 906.7 235.6 V239.1 C906.7 240.4 906.4 241.2 904.7 241.2" fill="none" stroke="#0E2F5F" stroke-width="1.9"/><path d="M897 238.5 L900.1 229 L903.2 238.5 M898 235.5 H902.2" fill="none" stroke="#0E2F5F" stroke-width="1.4"/></svg>
<svg style="left:940px;top:226px" width="16" height="16" viewBox="0 0 16 16"><rect x="0" y="0" width="16" height="5" fill="#0B2F63"/><rect x="0" y="6" width="4" height="4.5" fill="#BBBBBB"/><rect x="5" y="6" width="11" height="4.5" fill="#BBBBBB"/><rect x="0" y="11.5" width="4" height="4.5" fill="#BBBBBB"/><rect x="5" y="11.5" width="11" height="4.5" fill="#BBBBBB"/></svg>
<svg style="left:988px;top:226px" width="16" height="16" viewBox="988 226 16 16"><rect x="988" y="226" width="16" height="16" fill="#0E2F5F"/><circle cx="996" cy="234" r="4.7" fill="#fff"/><rect x="1000.00" y="232.90" width="2.2" height="2.2" fill="#fff" transform="rotate(0 1001.10 234.00)"/><rect x="998.51" y="236.51" width="2.2" height="2.2" fill="#fff" transform="rotate(45 999.61 237.61)"/><rect x="994.90" y="238.00" width="2.2" height="2.2" fill="#fff" transform="rotate(90 996.00 239.10)"/><rect x="991.29" y="236.51" width="2.2" height="2.2" fill="#fff" transform="rotate(135 992.39 237.61)"/><rect x="989.80" y="232.90" width="2.2" height="2.2" fill="#fff" transform="rotate(180 990.90 234.00)"/><rect x="991.29" y="229.29" width="2.2" height="2.2" fill="#fff" transform="rotate(225 992.39 230.39)"/><rect x="994.90" y="227.80" width="2.2" height="2.2" fill="#fff" transform="rotate(270 996.00 228.90)"/><rect x="998.51" y="229.29" width="2.2" height="2.2" fill="#fff" transform="rotate(315 999.61 230.39)"/><circle cx="996" cy="234" r="2.9" fill="#0E2F5F"/></svg>
<svg style="left:1035px;top:225px" width="18" height="18" viewBox="1035 225 18 18"><path d="M1044 226.1 L1051 232.7 H1046.7 V236.4 H1041.4 V232.7 H1037.2 Z" fill="#0E2F5F"/><path d="M1037.1 236 V241 H1050.9 V236" fill="none" stroke="#0E2F5F" stroke-width="2.2"/></svg>
<div class="a" style="left:1101px;top:212px;width:15px;height:14px;border:1px solid #D0D0D0;border-radius:3px;background:linear-gradient(#FAFAFA,#E8E8E8)"></div>
<svg style="left:1101px;top:213px" width="15" height="14" viewBox="0 0 15 14"><path d="M1.5 12.5 L6.5 7.5" stroke="#222" stroke-width="1.2"/><path d="M5 6 L9 2 L8.5 1 L10 0.8 L13.2 4 L13 5.5 L12 5 L8 9 L8.5 10.5 L3.5 5.5 Z" fill="#222"/></svg>
<!-- pane scrollbar -->
<div class="a" style="left:1116px;top:212px;width:16px;height:500px;background:#E8E8E8"></div>
<div class="a" style="left:1116px;top:267px;width:16px;height:257px;background:#BCBCBC"></div>
<svg style="left:1120px;top:217px" width="9" height="6" viewBox="0 0 9 6"><path d="M0.5 5 L4.5 1 L8.5 5" fill="none" stroke="#888" stroke-width="1"/></svg>
<svg style="left:1120px;top:701px" width="9" height="6" viewBox="0 0 9 6"><path d="M0.5 1 L4.5 5 L8.5 1" fill="none" stroke="#888" stroke-width="1"/></svg>


<!-- status bar -->
<div class="a" style="left:1px;top:728px;width:1146px;height:21px;background:#F3F2F1"></div>
<div id="t_st1" class="t" style="left:8.3px;top:731.7px;font-size:13px;transform:scaleX(0.779)">スライド 2/2</div>
<svg style="left:84px;top:732px" width="16" height="14" viewBox="0 0 16 14"><path d="M1.5 1.5 H6.5 C7.5 1.5 8 2 8 3 V12.5 C8 11.5 7.5 11 6.5 11 H1.5 Z M8 3 C8 2 8.5 1.5 9.5 1.5 H14.5 V6" fill="none" stroke="#444" stroke-width="1.1"/><path d="M9.5 9 L11.3 11.8 L15 6.5" fill="none" stroke="#444" stroke-width="1.1"/></svg>
<div id="t_st2" class="t" style="left:113.8px;top:733.2px;transform:scaleX(1.088)">日本語</div>
<svg style="left:708px;top:730px" width="20" height="18" viewBox="708 730 20 18"><path d="M709.8 738.5 H726.2 M709.8 742.5 H726.2 M709.8 746.5 H726.2" stroke="#444" stroke-width="1"/><path d="M714.8 735 L718 731.8 L721.2 735" fill="none" stroke="#444" stroke-width="1"/></svg>
<div id="t_note" class="t" style="left:725.4px;top:731.5px;font-size:13px;transform:scaleX(0.810)">ノート</div>
<div class="a" style="left:773px;top:728px;width:40px;height:21px;background:#C8C6C4"></div>
<svg style="left:784px;top:731px" width="18" height="16" viewBox="784 731 18 16"><path d="M786.5 733.5 H799.5 V744.5 H786.5 Z M789.5 733.5 V744.5 M789.5 742.5 H799.5 M792.5 735.5 H797.5 V739.5 H792.5 Z" fill="none" stroke="#262626" stroke-width="1"/></svg>
<svg style="left:825px;top:732px" width="17" height="14" viewBox="825 732 17 14"><path d="M826.5 733.5 H831.5 V737.5 H826.5 Z M834.5 733.5 H839.5 V737.5 H834.5 Z M826.5 740.5 H831.5 V744.5 H826.5 Z M834.5 740.5 H839.5 V744.5 H834.5 Z" fill="none" stroke="#444" stroke-width="1"/></svg>
<svg style="left:865px;top:732px" width="16" height="15" viewBox="865 732 16 15"><path d="M866.5 734 H871.5 C872.3 734 872.8 734.5 872.8 735.2 V745 C872.8 744.3 872.3 743.8 871.5 743.8 H866.5 Z M872.8 735.2 C872.8 734.5 873.3 734 874 734 H879 V743.8 H874 C873.3 743.8 872.8 744.3 872.8 745 M868 736.5 H871 M868 738.5 H871 M868 740.5 H871 M874.5 736.5 H877.5 M874.5 738.5 H877.5 M874.5 740.5 H877.5" fill="none" stroke="#444" stroke-width="1"/></svg>
<svg style="left:905px;top:732px" width="16" height="15" viewBox="905 732 16 15"><path d="M906 733.5 H919 M907.5 733.5 V740.5 H917.5 V733.5 M909.5 735.5 H915.5 V738.5 H909.5 Z M912.5 740.5 V744.5 M909.5 744.5 H915.5" fill="none" stroke="#444" stroke-width="1"/></svg>
<div class="a" style="left:939px;top:739px;width:8px;height:1px;background:#444"></div>
<div class="a" style="left:952px;top:739px;width:99px;height:1px;background:#A0A0A0"></div>
<div class="a" style="left:1002px;top:736px;width:1px;height:7px;background:#A0A0A0"></div>
<div class="a" style="left:977px;top:734px;width:5px;height:12px;background:#606060"></div>
<div class="a" style="left:1056px;top:739px;width:9px;height:1px;background:#444"></div>
<div class="a" style="left:1060px;top:735px;width:1px;height:9px;background:#444"></div>
<div id="t_zoom" class="t" style="left:1077.0px;top:733.0px;transform:scaleX(1.085)">56%</div>
<svg style="left:1115px;top:731px" width="17" height="16" viewBox="0 0 17 16"><rect x="4.5" y="4.5" width="8" height="7" fill="none" stroke="#444"/><path d="M6 2.5 L8.5 0.5 L11 2.5 M6 13.5 L8.5 15.5 L11 13.5 M2.5 5.5 L0.5 8 L2.5 10.5 M14.5 5.5 L16.5 8 L14.5 10.5" fill="none" stroke="#444"/></svg>


<div class="a" style="left:808px;top:604px;width:314px;height:64px;border:5px solid #ED1C24"></div>
</body></html>
